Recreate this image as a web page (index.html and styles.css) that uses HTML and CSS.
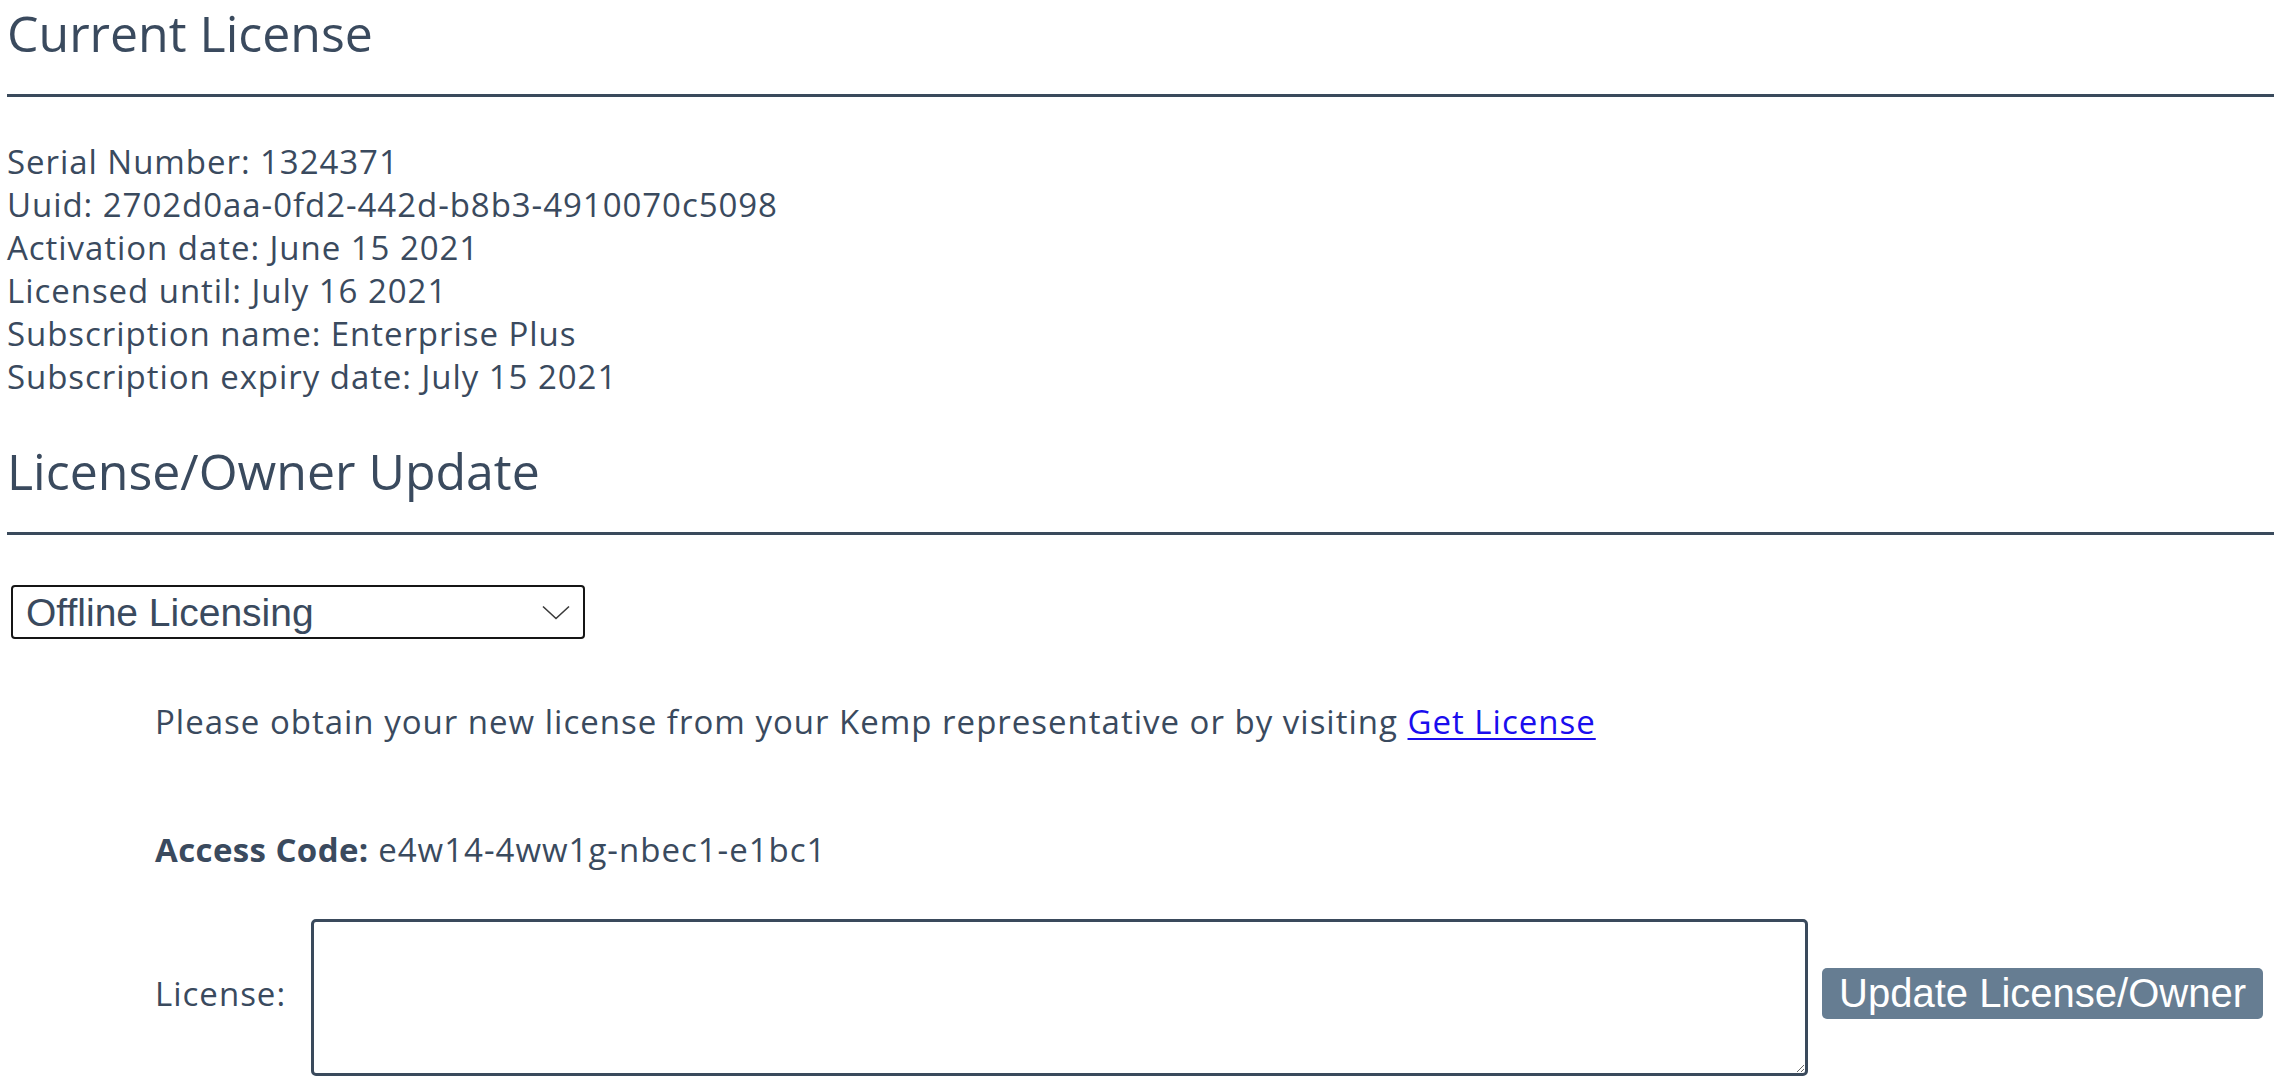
FILE: index.html
```html
<!DOCTYPE html>
<html lang="en">
<head>
<meta charset="utf-8">
<title>License</title>
<link rel="stylesheet" href="styles.css">
</head>
<body>
<main class="page">
  <h2 class="section-title first">Current License</h2>
  <div class="details">
    <div>Serial Number: 1324371</div>
    <div>Uuid: 2702d0aa-0fd2-442d-b8b3-4910070c5098</div>
    <div>Activation date: June 15 2021</div>
    <div>Licensed until: July 16 2021</div>
    <div>Subscription name: Enterprise Plus</div>
    <div>Subscription expiry date: July 15 2021</div>
  </div>
  <h2 class="section-title second">License/Owner Update</h2>
  <div class="select-wrap">
    <select class="mode-select">
      <option>Offline Licensing</option>
      <option>Online Licensing</option>
    </select>
    <svg class="chevron" width="28" height="15" viewBox="0 0 28 15"><path d="M1 1.5 L14 13.5 L27 1.5" fill="none" stroke="#3a3a3a" stroke-width="1.6"/></svg>
  </div>
  <div class="offline">
    <p class="hint">Please obtain your new license from your Kemp representative or by visiting <a href="#" class="link">Get License</a></p>
    <p class="access"><b>Access Code:</b> e4w14-4ww1g-nbec1-e1bc1</p>
    <div class="license-row">
      <label class="license-label" for="lic">License:</label>
      <textarea id="lic" class="license-input"></textarea>
      <button class="update-btn">Update License/Owner</button>
    </div>
  </div>
</main>
</body>
</html>
```
FILE: styles.css
```css
html, body {
  margin: 0;
  padding: 0;
  background: #ffffff;
}
body {
  font-family: "Open Sans", "Noto Sans", sans-serif;
  color: #3a4a5e;
  overflow: hidden;
}
.page {
  padding: 3px 0 0 7px;
}
.section-title {
  font-family: "Open Sans", "Noto Sans", sans-serif;
  font-weight: 400;
  font-size: 50px;
  line-height: 60px;
  margin: 0;
  padding: 0 0 31px 0;
  border-bottom: 3px solid #3a4a5c;
  color: #3a4a5e;
}
.section-title.second {
  margin-top: 43px;
}
.details {
  margin-top: 43px;
  font-size: 33px;
  line-height: 43px;
  letter-spacing: 0.95px;
}
.select-wrap {
  position: relative;
  width: 574px;
  margin: 50px 0 0 4px;
}
.mode-select {
  -webkit-appearance: none;
  appearance: none;
  display: block;
  width: 574px;
  height: 54px;
  box-sizing: border-box;
  border: 2px solid #151515;
  border-radius: 4px;
  background: #ffffff;
  font-family: "Liberation Sans", Arial, sans-serif;
  font-size: 39px;
  color: #3a4a5e;
  padding: 0 0 0 13px;
  margin: 0;
  outline: none;
}
.chevron {
  position: absolute;
  left: 531px;
  top: 20px;
  pointer-events: none;
}
.offline {
  margin-left: 148px;
  font-size: 33px;
  line-height: 43px;
  letter-spacing: 1px;
}
.hint {
  margin: 61px 0 0 0;
}
.link {
  color: #1a0dee;
  text-decoration: underline;
  text-decoration-thickness: 2px;
  text-underline-offset: 4px;
}
.access {
  margin: 85px 0 0 0;
}
.access b {
  font-weight: 700;
  letter-spacing: 0.4px;
}
.license-row {
  display: flex;
  align-items: center;
  margin-top: 48px;
}
.license-label {
  margin-bottom: 9px;
  margin-right: 25px;
}
.license-input {
  width: 1497px;
  height: 157px;
  box-sizing: border-box;
  border: 3px solid #3a4a5c;
  border-radius: 5px;
  margin: 0;
  padding: 4px;
  font-family: "Open Sans", sans-serif;
  font-size: 20px;
  resize: both;
  outline: none;
  flex: none;
}
.update-btn {
  margin: 0 0 9px 14px;
  height: 51px;
  padding: 0 17px;
  border: none;
  border-radius: 5px;
  background: #667d92;
  color: #ffffff;
  font-family: "Liberation Sans", Arial, sans-serif;
  font-size: 40px;
  line-height: 51px;
  letter-spacing: 0;
  flex: none;
  cursor: pointer;
}
```
